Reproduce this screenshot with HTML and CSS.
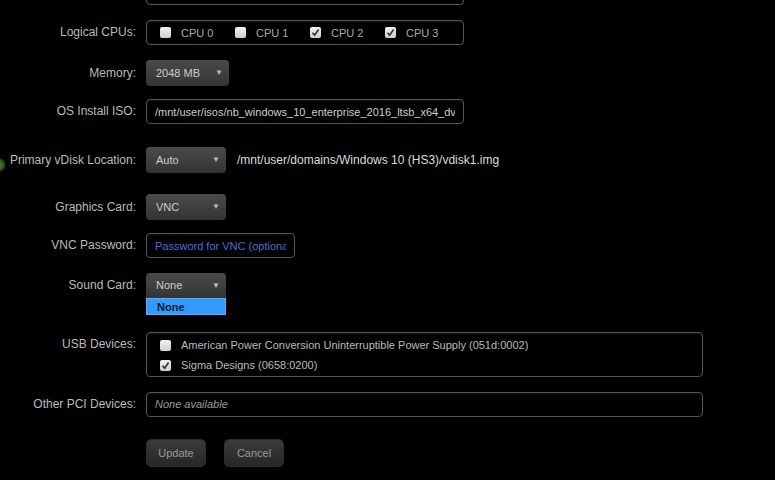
FILE: index.html
```html
<!DOCTYPE html>
<html lang="en">
<head>
    <meta charset="UTF-8">
    <title>Edit VM</title>
    <link rel="stylesheet" href="styles.css">
</head>
<body>
    <div class="vm-form">
        <div class="row first">
            <div class="label"></div>
            <div class="box wide"></div>
        </div>

        <div class="row">
            <div class="label">Logical CPUs:</div>
            <div class="box wide cpu-box">
                <label class="cpu"><span class="cb"></span>CPU 0</label>
                <label class="cpu"><span class="cb"></span>CPU 1</label>
                <label class="cpu"><span class="cb checked"><svg viewBox="0 0 11 11"><path d="M2.5 5.8 L4.6 8.2 L8.6 2.6"/></svg></span>CPU 2</label>
                <label class="cpu"><span class="cb checked"><svg viewBox="0 0 11 11"><path d="M2.5 5.8 L4.6 8.2 L8.6 2.6"/></svg></span>CPU 3</label>
            </div>
        </div>

        <div class="row">
            <div class="label tall">Memory:</div>
            <div class="select mem">2048 MB<span class="arrow">&#9660;</span></div>
        </div>

        <div class="row tight">
            <div class="label">OS Install ISO:</div>
            <input class="field wide" type="text" readonly value="/mnt/user/isos/nb_windows_10_enterprise_2016_ltsb_x64_dvd.iso">
        </div>

        <div class="row loose">
            <div class="label tall">
                <span class="go-icon"></span>
                Primary vDisk Location:
            </div>
            <div class="select">Auto<span class="arrow">&#9660;</span></div>
            <span class="disk-path">/mnt/user/domains/Windows 10 (HS3)/vdisk1.img</span>
        </div>

        <div class="row loose2">
            <div class="label tall">Graphics Card:</div>
            <div class="select">VNC<span class="arrow">&#9660;</span></div>
        </div>

        <div class="row tight">
            <div class="label">VNC Password:</div>
            <input class="field pass" type="password" placeholder="Password for VNC (optional)">
        </div>

        <div class="row">
            <div class="label">Sound Card:</div>
            <div class="select-wrap">
                <div class="select short">None<span class="arrow">&#9660;</span></div>
                <div class="dropdown">None</div>
            </div>
        </div>

        <div class="row usb-row">
            <div class="label">USB Devices:</div>
            <div class="box full usb-box">
                <label class="usb"><span class="cb"></span>American Power Conversion Uninterruptible Power Supply (051d:0002)</label>
                <label class="usb"><span class="cb checked"><svg viewBox="0 0 11 11"><path d="M2.5 5.8 L4.6 8.2 L8.6 2.6"/></svg></span>Sigma Designs (0658:0200)</label>
            </div>
        </div>

        <div class="row">
            <div class="label">Other PCI Devices:</div>
            <div class="box full text none">None available</div>
        </div>

        <div class="row buttons">
            <div class="label"></div>
            <button class="btn">Update</button>
            <button class="btn">Cancel</button>
        </div>
    </div>
</body>
</html>
```

FILE: styles.css
```css
body {
    margin: 0;
    padding: 0;
    background: #000;
    font-family: 'Liberation Sans', Arial, sans-serif;
    font-size: 12px;
    color: #bbb;
    height: 480px;
    overflow: hidden;
}
.vm-form {
    margin-top: -20px;
}
.row {
    display: flex;
    align-items: flex-start;
    margin-top: 15px;
}
.row.first {
    margin-top: 0;
}
.row.tight {
    margin-top: 13px;
}
.row.loose {
    margin-top: 23px;
}
.row.loose2 {
    margin-top: 21px;
}
.row.usb-row {
    margin-top: 34px;
}
.row.buttons {
    margin-top: 22px;
}
.label {
    position: relative;
    width: 136px;
    padding-right: 10px;
    text-align: right;
    line-height: 25px;
    color: #bbb;
    flex-shrink: 0;
}
.label.tall {
    line-height: 26px;
}
.box,
.field {
    box-sizing: border-box;
    height: 25px;
    margin: 0;
    background: #000;
    border: 1px solid #555;
    border-radius: 4px;
    box-shadow: inset 0 1px 2px rgba(255, 255, 255, 0.08);
    font-family: 'Liberation Sans', Arial, sans-serif;
    font-size: 11px;
}
.field {
    padding: 0 8px;
    color: #ccc;
    outline: none;
}
.field::placeholder {
    color: #4d6fd6;
    opacity: 1;
}
.box.wide,
.field.wide {
    width: 318px;
}
.box.full {
    width: 557px;
}
.field.pass {
    width: 149px;
}
.box.text {
    padding-left: 8px;
    line-height: 23px;
    color: #ccc;
    white-space: nowrap;
    overflow: hidden;
}
.box.none {
    font-style: italic;
    color: #999;
}
.cpu-box {
    display: flex;
    align-items: center;
    padding-left: 13px;
    color: #aaa;
}
.cpu {
    display: flex;
    align-items: center;
    width: 75px;
}
.cb {
    display: inline-flex;
    width: 11px;
    height: 11px;
    margin-right: 10px;
    background: linear-gradient(#f2f2f2, #cfcfcf);
    border-radius: 2px;
}
.cb svg {
    width: 11px;
    height: 11px;
}
.cb path {
    fill: none;
    stroke: #333;
    stroke-width: 1.7;
}
.select {
    box-sizing: border-box;
    position: relative;
    width: 80px;
    height: 26px;
    padding-left: 10px;
    line-height: 26px;
    font-size: 11px;
    color: #ccc;
    background: linear-gradient(#4a4a4a, #343434);
    border-radius: 4px;
}
.select.mem {
    width: 83px;
}
.select.short {
    height: 25px;
    line-height: 25px;
    border-radius: 4px 4px 0 0;
}
.arrow {
    position: absolute;
    right: 6px;
    top: 0;
    font-size: 8px;
    color: #bbb;
}
.select-wrap {
    position: relative;
}
.dropdown {
    position: absolute;
    top: 25px;
    left: 0;
    box-sizing: border-box;
    width: 80px;
    height: 17px;
    padding-left: 10px;
    line-height: 16px;
    font-size: 11px;
    background: #3399fa;
    border: 1px solid #5aaeff;
    font-weight: bold;
    color: #0e1a33;
}
.disk-path {
    margin-left: 11px;
    line-height: 26px;
    color: #ddd;
}
.go-icon {
    position: absolute;
    left: -7px;
    top: 12px;
    width: 12px;
    height: 12px;
    border-radius: 50%;
    background: #3d6b1f;
    box-shadow: inset 0 0 0 2px #2a4d12;
}
.usb-box {
    height: 45px;
    padding: 2px 13px 1px;
    color: #bbb;
}
.usb {
    display: flex;
    align-items: center;
    height: 20px;
}
.btn {
    box-sizing: border-box;
    width: 60px;
    height: 28px;
    margin-right: 18px;
    padding: 0;
    font-family: 'Liberation Sans', Arial, sans-serif;
    font-size: 11px;
    color: #999;
    background: linear-gradient(#3c3c3c, #262626);
    border: 1px solid #2e2e2e;
    border-radius: 5px;
}
```
